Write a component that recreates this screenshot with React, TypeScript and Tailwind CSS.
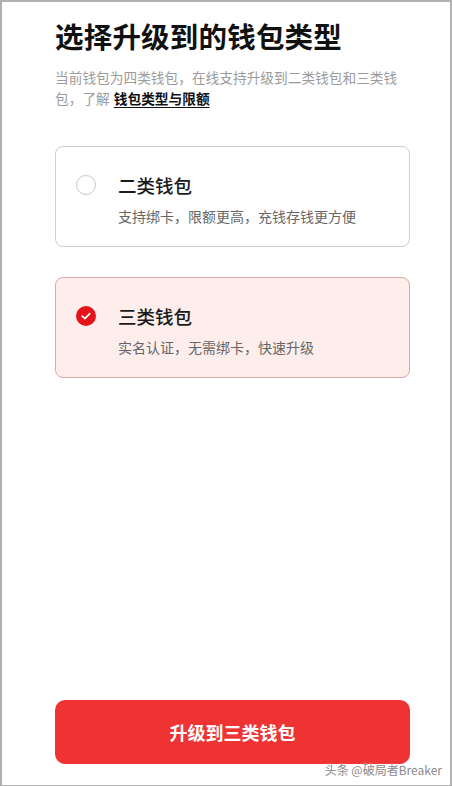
import React from "react";

const font = { fontFamily: '"Noto Sans CJK SC", "Noto Sans", sans-serif' };

function Radio({ checked }: { checked: boolean }) {
  if (checked) {
    return (
      <div className="w-[20px] h-[20px] rounded-full bg-[#e5141b] flex items-center justify-center shrink-0">
        <svg width="12" height="12" viewBox="0 0 12 12" fill="none">
          <path d="M2.3 6.2 L4.9 8.6 L9.7 3.6" stroke="white" strokeWidth="1.7" strokeLinecap="round" strokeLinejoin="round" />
        </svg>
      </div>
    );
  }
  return <div className="w-[20px] h-[20px] rounded-full border border-[#c8c8c8] bg-white shrink-0" />;
}

function Card({ title, desc, checked }: { title: string; desc: string; checked: boolean }) {
  return (
    <div
      className={
        "rounded-[8px] border pl-[20px] pr-4 pt-[25px] pb-[20px] " +
        (checked ? "bg-[#fdeeec] border-[#dcaaa6]" : "bg-white border-[#cfcfcf]")
      }
    >
      <div className="flex items-center gap-[22px] h-[26px]">
        <Radio checked={checked} />
        <div className="text-[18.5px] leading-[26px] font-medium text-[#1a1a1a]">{title}</div>
      </div>
      <div className="pl-[42px] mt-[8px] text-[14px] leading-[20px] text-[#666666]">{desc}</div>
    </div>
  );
}

export default function App() {
  return (
    <div
      style={font}
      className="relative w-[452px] h-[786px] bg-white border-l-2 border-t-2 border-r-2 border-b border-[#b0b0b0] flex flex-col pl-[53px] pr-[40px]"
    >
      <h1 className="mt-[16px] text-[28.5px] leading-[36px] font-bold text-[#111111] tracking-[0.2px]">
        选择升级到的钱包类型
      </h1>
      <div className="mt-[13px] text-[13.7px] leading-[21px] text-[#9b9b9b]">
        <div>当前钱包为四类钱包，在线支持升级到二类钱包和三类钱</div>
        <div className="flex gap-[4px]">
          <span>包，了解</span>
          <span className="text-[#111111] font-bold underline underline-offset-[3px]">钱包类型与限额</span>
        </div>
      </div>
      <div className="mt-[37px] flex flex-col gap-[30px]">
        <Card title="二类钱包" desc="支持绑卡，限额更高，充钱存钱更方便" checked={false} />
        <Card title="三类钱包" desc="实名认证，无需绑卡，快速升级" checked={true} />
      </div>
      <div className="mt-auto mb-[21px]">
        <button className="w-full h-[64px] rounded-[10px] bg-[#ef3333] text-white text-[18px] font-bold">
          升级到三类钱包
        </button>
      </div>
      <div className="absolute right-[8px] bottom-[7px] text-[12px] leading-[16px] text-[#8a8a8a] [text-shadow:0_0_2px_white,0_0_2px_white]">
        头条 @破局者Breaker
      </div>
    </div>
  );
}
